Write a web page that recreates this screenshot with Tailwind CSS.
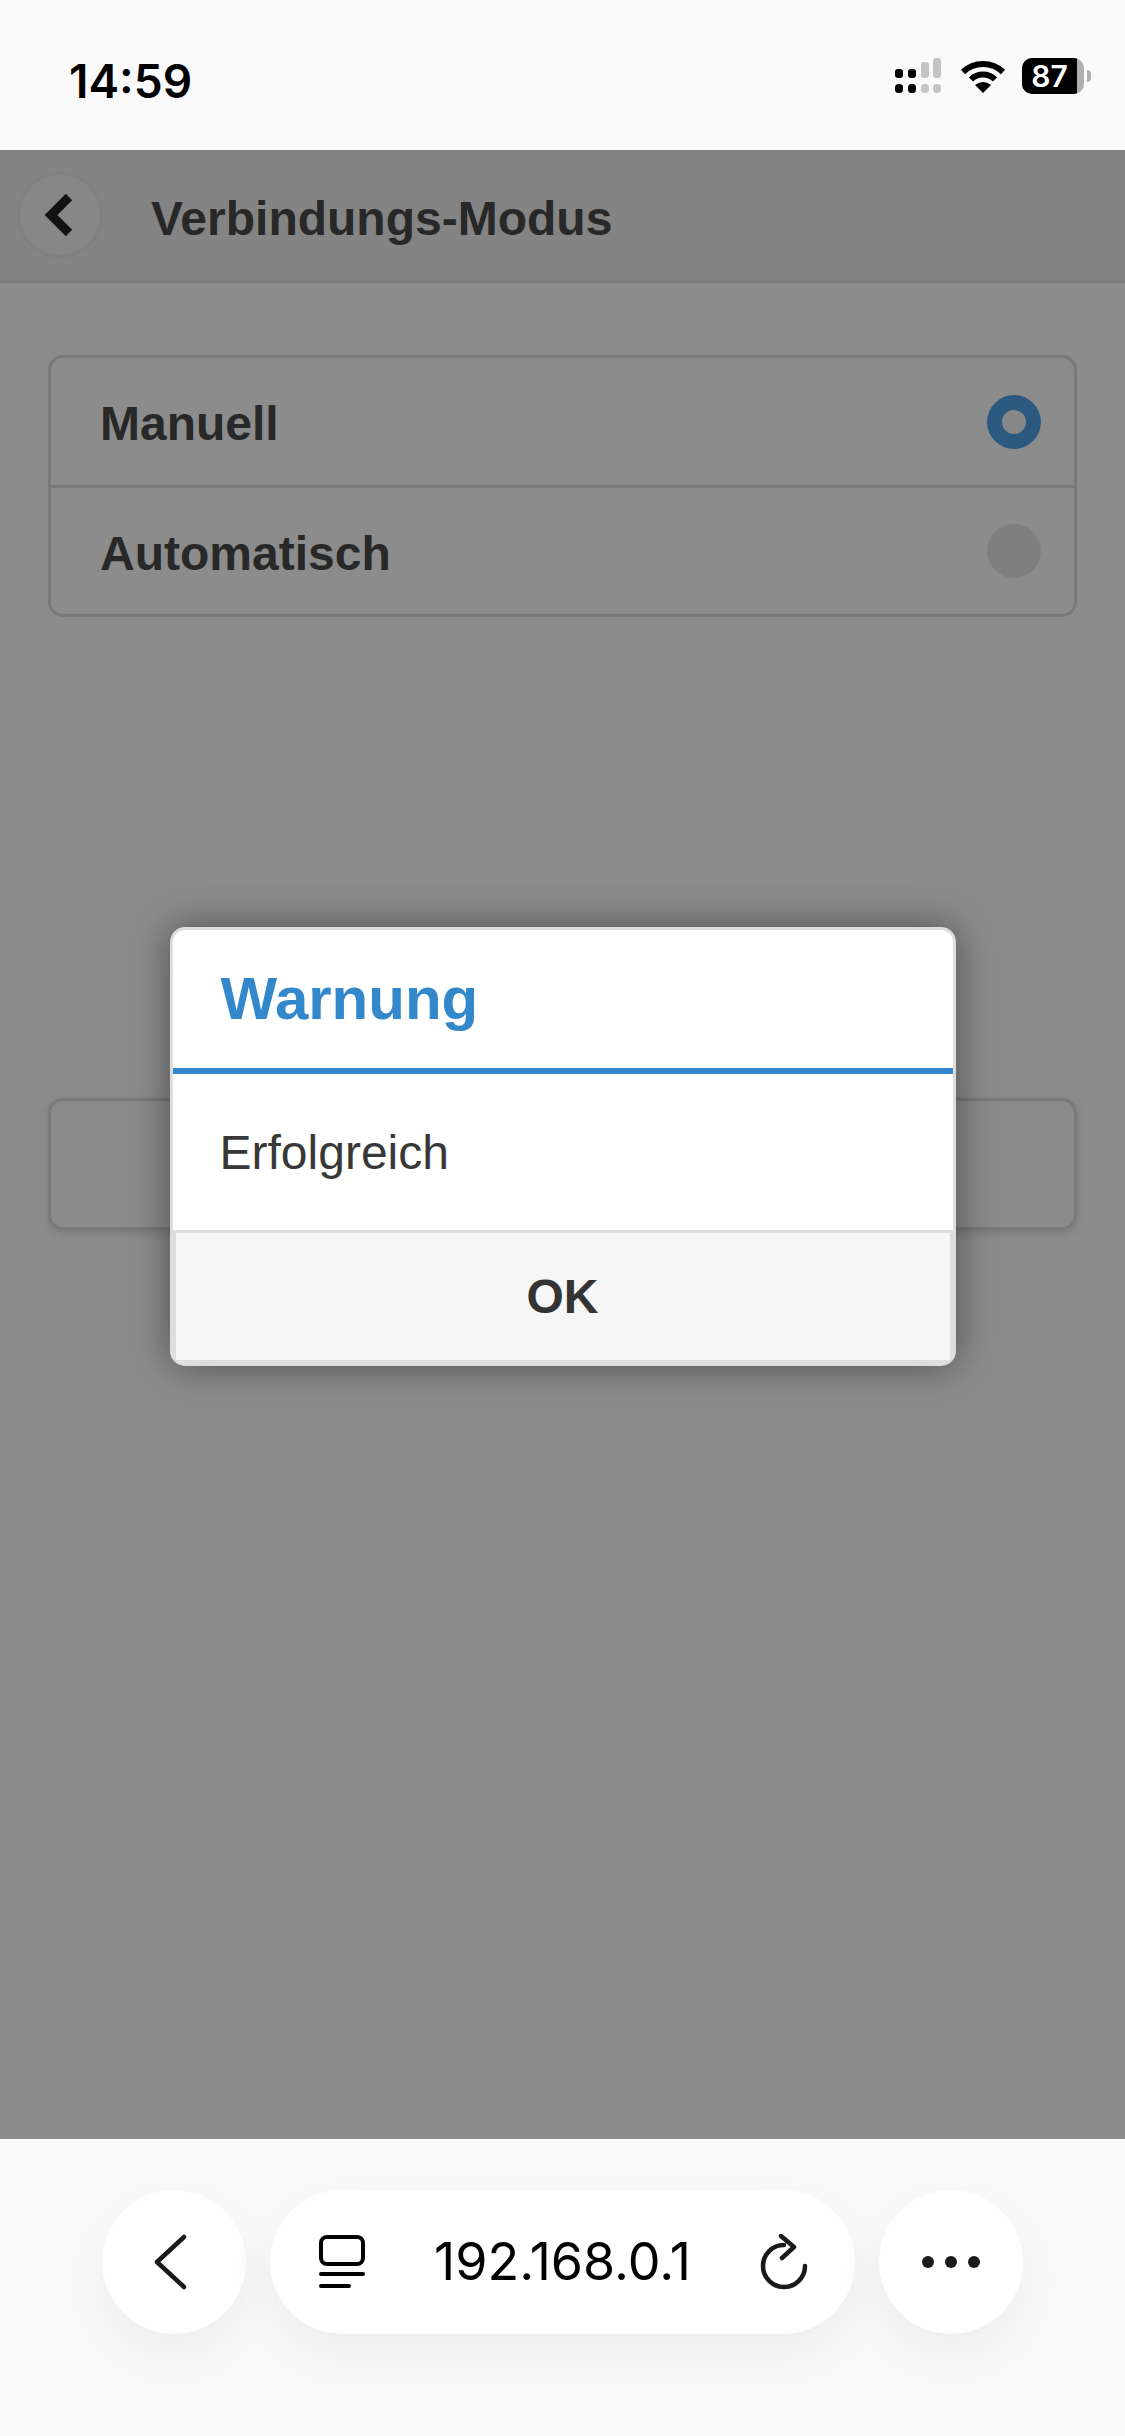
<!DOCTYPE html>
<html lang="de">
<head>
  <meta charset="UTF-8">
  <meta name="viewport" content="width=device-width, initial-scale=1.0">
  <title>Verbindungs-Modus</title>
  <script src="https://cdn.jsdelivr.net/npm/@tailwindcss/browser@4"></script>
</head>
<body class="bg-[#fafafa] font-['Liberation_Sans',sans-serif]">
  <div class="flex flex-col w-[1125px] h-[2436px] overflow-hidden">

    <!-- Status bar -->
    <div class="h-[150px] shrink-0 bg-[#fafafa] flex items-center justify-between pl-[69px] pr-[34px] pt-[2px]">
      <span class="mt-[10px] font-['Inter',sans-serif] font-semibold text-[46px] leading-none text-black">14:59</span>
      <div class="flex items-center">
        <svg width="46" height="36" viewBox="0 0 46 36" class="mr-[19px]">
          <rect x="0" y="11" width="8" height="9" rx="3" fill="#000"/>
          <rect x="13" y="11" width="8" height="9" rx="3" fill="#000"/>
          <rect x="26" y="4" width="8" height="16" rx="3" fill="#c4c4c4"/>
          <rect x="38" y="0" width="8" height="20" rx="3" fill="#c4c4c4"/>
          <rect x="0" y="26" width="8" height="9" rx="3.5" fill="#000"/>
          <rect x="13" y="26" width="8" height="9" rx="3.5" fill="#000"/>
          <rect x="26" y="26" width="8" height="9" rx="3.5" fill="#c4c4c4"/>
          <rect x="38" y="26" width="8" height="9" rx="3.5" fill="#c4c4c4"/>
        </svg>
        <svg width="46" height="33" viewBox="0 0 46 33" class="mr-[16px]">
          <path d="M3 12 A29 29 0 0 1 43 12" fill="none" stroke="#000" stroke-width="6"/>
          <path d="M11 19.5 A17 17 0 0 1 35 19.5" fill="none" stroke="#000" stroke-width="6"/>
          <path d="M23 33 L15 25 Q23 19 31 25 Z" fill="#000"/>
        </svg>
        <div class="w-[62px] h-[36px] rounded-[10px] bg-[#b0b0b0] overflow-hidden flex">
          <div class="w-[55px] h-full bg-black flex items-center justify-center">
            <span class="font-['Inter',sans-serif] font-semibold text-[30px] leading-[36px] text-white">87</span>
          </div>
        </div>
        <div class="w-[4px] h-[12px] ml-[3px] rounded-r-full bg-[#b0b0b0]"></div>
      </div>
    </div>

    <!-- Page under the dialog -->
    <div class="relative flex-1 bg-white">
      <div class="h-[133px] bg-[#f0f0f0] border-b-[3px] border-[#e6e6e6] flex items-center pl-[17px]">
        <div class="w-[86px] h-[86px] rounded-full bg-[#f6f6f6] border-[3px] border-[#ebebeb] flex items-center justify-center">
          <svg width="30" height="44" viewBox="0 0 30 44" class="mr-[3px]">
            <path d="M25 4 L7 22 L25 40" fill="none" stroke="#222" stroke-width="9"/>
          </svg>
        </div>
        <h1 class="mt-[7px] ml-[48px] text-[48px] font-bold text-[#4a4a4a] leading-none">Verbindungs-Modus</h1>
      </div>

      <div class="px-[48px] pt-[72px]">
        <div class="rounded-[15px] border-[3px] border-[#dddddd] bg-white">
          <div class="h-[130px] flex items-center justify-between pl-[49px] pr-[33px] border-b-[3px] border-[#dddddd]">
            <span class="mt-[5px] text-[48px] font-bold text-[#4a4a4a] leading-none">Manuell</span>
            <div class="w-[54px] h-[54px] rounded-full bg-[#4fa3e8] flex items-center justify-center">
              <div class="w-[24px] h-[24px] rounded-full bg-[#f6f6f6]"></div>
            </div>
          </div>
          <div class="h-[126px] flex items-center justify-between pl-[49px] pr-[33px]">
            <span class="mt-[5px] text-[48px] font-bold text-[#4a4a4a] leading-none">Automatisch</span>
            <div class="w-[54px] h-[54px] rounded-full bg-[#e8e8e8]"></div>
          </div>
        </div>

        <div class="mt-[481px] h-[132px] rounded-[15px] border-[3px] border-[#dddddd] bg-[#fdfdfd] shadow-[0_3px_9px_rgba(0,0,0,0.15)]"></div>
      </div>

      <!-- Overlay and dialog -->
      <div class="absolute inset-0 bg-black/45 flex items-center justify-center pt-[3px]">
        <div class="w-[786px] h-[439px] flex flex-col rounded-[15px] border-[3px] border-[#dddddd] bg-white overflow-hidden shadow-[0_0_40px_rgba(0,0,0,0.45)]">
          <div class="h-[144px] shrink-0 border-b-[6px] border-[#3388cc] flex items-center pl-[48px]">
            <h2 class="text-[60px] font-bold text-[#3388cc] leading-none">Warnung</h2>
          </div>
          <div class="flex-1 flex items-center pl-[47px] pt-[3px]">
            <p class="text-[48px] text-[#383838] leading-none">Erfolgreich</p>
          </div>
          <button class="h-[133px] shrink-0 pt-[2px] bg-[#f6f6f6] border-[3px] border-[#dddddd] text-[48px] font-bold text-[#333333] leading-none">OK</button>
        </div>
      </div>
    </div>

    <!-- Browser toolbar -->
    <div class="h-[297px] shrink-0 bg-[#fafafa] flex justify-center gap-[24px] pt-[51px]">
      <div class="w-[144px] h-[144px] rounded-full bg-[#fefefe] shadow-[0_20px_50px_rgba(0,0,0,0.06)] flex items-center justify-center">
        <svg width="36" height="58" viewBox="0 0 36 58" class="mr-[9px]">
          <path d="M32 4 L5 29 L32 54" fill="none" stroke="#1a1a1a" stroke-width="4.5" stroke-linecap="round" stroke-linejoin="round"/>
        </svg>
      </div>
      <div class="w-[585px] h-[144px] rounded-full bg-[#fefefe] shadow-[0_20px_50px_rgba(0,0,0,0.06)] flex items-center justify-between pl-[49px] pr-[47px]">
        <svg width="46" height="54" viewBox="0 0 46 54" class="text-black">
          <rect x="2" y="2" width="42" height="27" rx="6" fill="none" stroke="currentColor" stroke-width="4"/>
          <path d="M2 39 H44 M2 51 H30" fill="none" stroke="currentColor" stroke-width="4" stroke-linecap="round"/>
        </svg>
        <span class="font-['Inter',sans-serif] text-[52px] leading-none text-black">192.168.0.1</span>
        <svg width="48" height="56" viewBox="0 0 48 56">
          <path d="M24 11 A21 21 0 1 0 45 32" fill="none" stroke="#1a1a1a" stroke-width="4.5" stroke-linecap="round"/>
          <path d="M21 2 L34 13 L22 24" fill="none" stroke="#1a1a1a" stroke-width="4.5" stroke-linecap="round" stroke-linejoin="round"/>
        </svg>
      </div>
      <div class="w-[144px] h-[144px] rounded-full bg-[#fefefe] shadow-[0_20px_50px_rgba(0,0,0,0.06)] flex items-center justify-center gap-[11px]">
        <div class="w-[12px] h-[12px] rounded-full bg-[#1a1a1a]"></div>
        <div class="w-[12px] h-[12px] rounded-full bg-[#1a1a1a]"></div>
        <div class="w-[12px] h-[12px] rounded-full bg-[#1a1a1a]"></div>
      </div>
    </div>
  </div>
</body>
</html>
